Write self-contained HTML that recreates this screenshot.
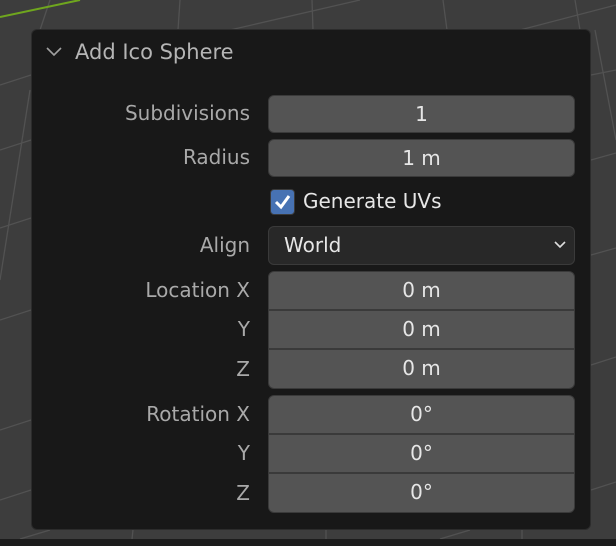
<!DOCTYPE html>
<html><head><style>
*{margin:0;padding:0;box-sizing:border-box}
body{width:616px;height:546px;background:#3d3d3d;position:relative;overflow:hidden;font-family:"DejaVu Sans","Liberation Sans",sans-serif}
.panel{position:absolute;left:31px;top:29px;width:560px;height:501px;background:#181818;border:1px solid #2c2c2c;border-radius:6px}
.lbl{position:absolute;right:366px;width:220px;text-align:right;color:#a9a9a9;font-size:20px}
.f{position:absolute;left:268px;width:307px;background:#545454;border:1px solid #3a3a3a;color:#e6e6e6;font-size:20px;text-align:center}
.abs{position:absolute}
</style></head><body>
<svg class="abs" style="left:0;top:0" width="616" height="546">
<g stroke="#525252" stroke-width="1.3" fill="none">
<line x1="50" y1="0" x2="40" y2="30"/><line x1="180" y1="0" x2="178" y2="30"/><line x1="312" y1="0" x2="313" y2="30"/><line x1="443" y1="0" x2="447" y2="30"/><line x1="575" y1="0" x2="580" y2="30"/>
<line x1="230" y1="30" x2="360" y2="0"/><line x1="520" y1="30" x2="616" y2="5"/>
<line x1="30" y1="90" x2="0" y2="280"/><line x1="0" y1="85" x2="31" y2="75"/><line x1="0" y1="150" x2="31" y2="140"/><line x1="0" y1="228" x2="31" y2="218"/><line x1="0" y1="320" x2="31" y2="310"/><line x1="0" y1="430" x2="31" y2="420"/><line x1="0" y1="500" x2="31" y2="490"/>
<line x1="591" y1="75" x2="616" y2="70"/><line x1="591" y1="160" x2="616" y2="153"/><line x1="591" y1="255" x2="616" y2="248"/><line x1="591" y1="365" x2="616" y2="357"/><line x1="591" y1="490" x2="616" y2="482"/><line x1="595" y1="30" x2="616" y2="140"/>
<line x1="20" y1="539" x2="50" y2="530"/><line x1="132" y1="539" x2="133" y2="530"/><line x1="326" y1="539" x2="326" y2="530"/><line x1="440" y1="539" x2="470" y2="530"/><line x1="522" y1="539" x2="522" y2="530"/>
</g>
<line x1="0" y1="17" x2="80" y2="0" stroke="#6fa61e" stroke-width="2"/>
<rect x="0" y="539" width="616" height="7" fill="#1c1c1c"/>
</svg>
<div class="panel"></div>
<svg class="abs" style="left:45px;top:45px" width="20" height="14"><path d="M2 3 L9 10 L16 3" stroke="#a0a0a0" stroke-width="1.6" fill="none"/></svg>
<div class="abs" style="left:75px;top:40px;color:#b5b5b5;font-size:21px">Add Ico Sphere</div>

<div class="lbl" style="top:101px">Subdivisions</div>
<div class="f" style="top:95px;height:38px;line-height:36px;border-radius:6px">1</div>
<div class="lbl" style="top:145px">Radius</div>
<div class="f" style="top:139px;height:38px;line-height:36px;border-radius:6px">1 m</div>

<div class="abs" style="left:270px;top:189px;width:25px;height:26px;background:#4772b3;border:1px solid #3a3a3a;border-radius:4px"></div>
<svg class="abs" style="left:270px;top:189px" width="25" height="26"><path d="M6 13 L11 18 L19 7" stroke="#fff" stroke-width="3" fill="none"/></svg>
<div class="abs" style="left:303px;top:189px;color:#e6e6e6;font-size:20px">Generate UVs</div>

<div class="lbl" style="top:233px">Align</div>
<div class="f" style="top:226px;height:39px;background:#282828;border-radius:6px;text-align:left;padding-left:15px;line-height:37px">World</div>
<svg class="abs" style="left:553px;top:240px" width="14" height="10"><path d="M2 2 L7 7 L12 2" stroke="#ddd" stroke-width="1.6" fill="none"/></svg>

<div class="lbl" style="top:278px">Location X</div>
<div class="lbl" style="top:317px">Y</div>
<div class="lbl" style="top:357px">Z</div>
<div class="f" style="top:271px;height:39px;line-height:37px;border-radius:6px 6px 0 0">0 m</div>
<div class="f" style="top:310px;height:39px;line-height:37px">0 m</div>
<div class="f" style="top:349px;height:40px;line-height:37px;border-radius:0 0 6px 6px">0 m</div>

<div class="lbl" style="top:402px">Rotation X</div>
<div class="lbl" style="top:441px">Y</div>
<div class="lbl" style="top:481px">Z</div>
<div class="f" style="top:395px;height:39px;line-height:37px;border-radius:6px 6px 0 0">0°</div>
<div class="f" style="top:434px;height:39px;line-height:37px">0°</div>
<div class="f" style="top:473px;height:40px;line-height:37px;border-radius:0 0 6px 6px">0°</div>
</body></html>
